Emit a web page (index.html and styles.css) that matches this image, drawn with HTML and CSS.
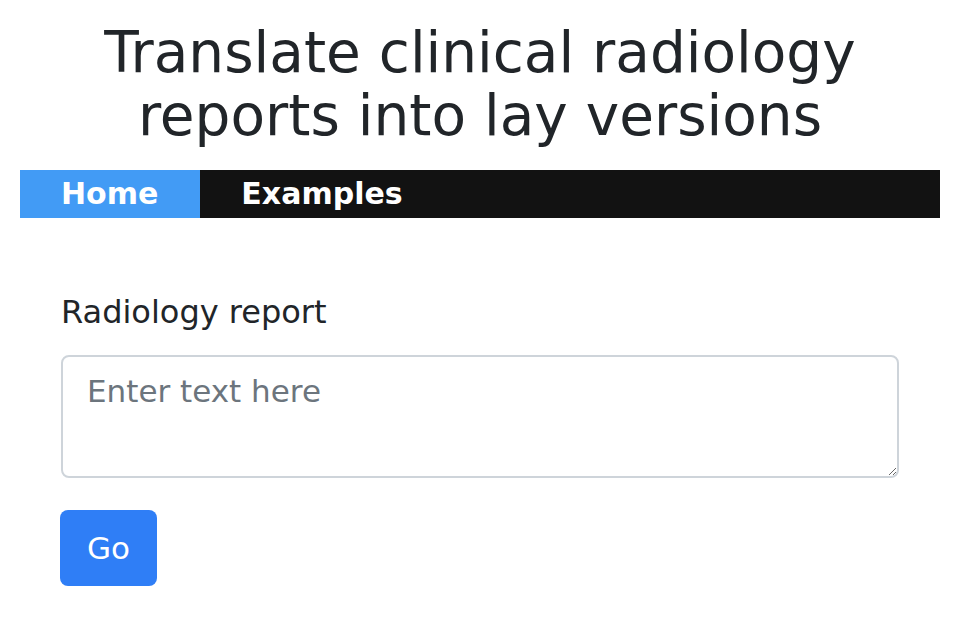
FILE: index.html
```html
<!DOCTYPE html>
<html>
<head>
<meta charset="utf-8">
<link rel="stylesheet" href="styles.css">
</head>
<body>
<h1 class="title">Translate clinical radiology<br>reports into lay versions</h1>
<nav class="nav">
  <a class="nav-link active" href="#">Home</a>
  <a class="nav-link" href="#">Examples</a>
</nav>
<main class="content">
  <form class="form">
    <label class="label" for="report">Radiology report</label>
    <textarea id="report" class="field" rows="2" placeholder="Enter text here"></textarea>
    <button type="button" class="btn">Go</button>
  </form>
</main>
</body>
</html>
```
FILE: styles.css
```css
html, body {
  margin: 0;
  padding: 0;
  background: #fff;
}
body {
  font-family: "DejaVu Sans", "Open Sans", sans-serif;
  color: #212529;
}
.title {
  margin: 21px 0 0;
  font-size: 56.5px;
  line-height: 63px;
  font-weight: 400;
  text-align: center;
  color: #212529;
}
.nav {
  display: flex;
  margin: 23px 20px 0;
  height: 48px;
  background: #121212;
}
.nav-link {
  display: block;
  padding: 0 42px 0 41px;
  font-size: 30px;
  font-weight: 700;
  line-height: 48px;
  color: #fff;
  text-decoration: none;
}
.nav-link.active {
  background: #429bf5;
}
.content {
  padding: 0 61px;
}
.form {
  display: flex;
  flex-direction: column;
  align-items: flex-start;
}
.label {
  margin-top: 74px;
  font-size: 32px;
  line-height: 40px;
}
.field {
  box-sizing: border-box;
  width: 100%;
  height: 123px;
  margin-top: 23px;
  padding: 10px 24px;
  border: 2px solid #ced4da;
  border-radius: 8px;
  font-family: inherit;
  font-size: 31px;
  line-height: 48px;
  color: #495057;
  resize: vertical;
}
.field::placeholder {
  color: #6c757d;
}
.btn {
  margin-top: 32px;
  margin-left: -1px;
  height: 76px;
  padding: 0 27px;
  border: none;
  border-radius: 8px;
  background: #2f7ef6;
  color: #fff;
  font-family: inherit;
  font-size: 31px;
}
```
